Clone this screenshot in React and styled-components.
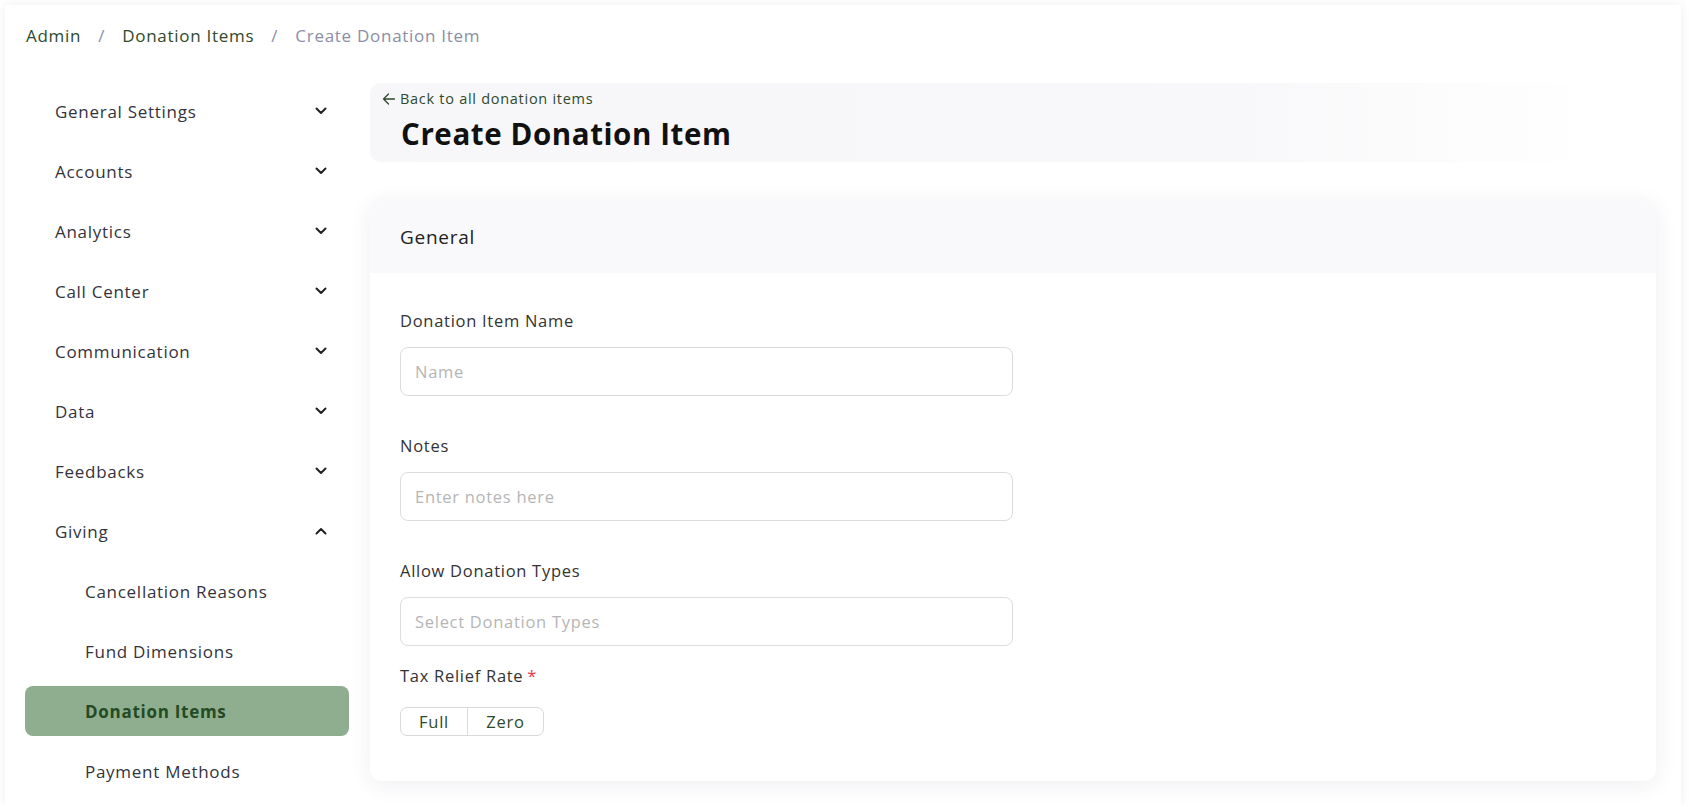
import React from "react";
import styled, { createGlobalStyle } from "styled-components";

const GlobalStyle = createGlobalStyle`
  body {
    margin: 0;
    background: #fff;
    font-family: "Open Sans", "Liberation Sans", sans-serif;
    letter-spacing: 0.045em;
    color: #33333d;
  }
  * { box-sizing: border-box; }
`;

const Frame = styled.div`
  margin: 5px 8px 0 5px;
  height: 800px;
  overflow: hidden;
  background: #fff;
  box-shadow: 0 0 10px rgba(30, 30, 60, 0.07);
  padding: 0 25px 0 20px;
  display: flex;
  flex-direction: column;
`;

const Crumbs = styled.nav`
  flex-shrink: 0;
  display: flex;
  align-items: flex-start;
  gap: 17px;
  padding: 18px 0 0 1px;
  height: 78px;
  font-size: 17px;
  line-height: 26px;
`;

const Crumb = styled.span`
  color: ${(p) => (p.$current ? "#8a8ea6" : "#2e4a2c")};
`;

const Slash = styled.span`
  color: #8a8ea6;
`;

const Body = styled.div`
  display: grid;
  grid-template-columns: 324px 1fr;
  column-gap: 21px;
  flex: 1;
`;

const Sidebar = styled.ul`
  list-style: none;
  margin: 0;
  padding: 3px 0 0;
  display: flex;
  flex-direction: column;
  gap: 10px;
`;

const NavItem = styled.li`
  flex-shrink: 0;
  height: 50px;
  display: flex;
  align-items: center;
  justify-content: space-between;
  padding: 0 22px 0 ${(p) => (p.$sub ? 60 : 30)}px;
  border-radius: 8px;
  font-size: 17px;
  color: ${(p) => (p.$active ? "#244a24" : "#33333d")};
  font-weight: ${(p) => (p.$active ? 700 : 400)};
  background: ${(p) => (p.$active ? "#8fae8f" : "transparent")};
`;

const Main = styled.main`
  display: flex;
  flex-direction: column;
  gap: 38px;
`;

const PageHead = styled.div`
  height: 79px;
  border-radius: 10px;
  padding: 6px 0 0 12px;
  background: linear-gradient(90deg, #f7f7fa 0%, #f8f8fa 70%, rgba(255, 255, 255, 0) 100%);
  margin-right: 50px;
`;

const BackLink = styled.a`
  display: flex;
  align-items: center;
  gap: 4px;
  font-size: 14.5px;
  line-height: 20px;
  color: #2e4a2c;
  text-decoration: none;
`;

const Title = styled.h1`
  margin: 3px 0 0;
  padding-left: 19px;
  font-size: 29.5px;
  line-height: 44px;
  font-weight: 700;
  letter-spacing: 0.02em;
  color: #111;
`;

const Card = styled.section`
  background: #fff;
  border-radius: 12px;
  box-shadow: 0 4px 22px rgba(40, 40, 90, 0.08);
  overflow: hidden;
`;

const CardHead = styled.div`
  height: 73px;
  background: #f9f9fb;
  display: flex;
  align-items: center;
  padding-left: 30px;
  font-size: 19px;
  color: #222;
`;

const CardBody = styled.div`
  padding: 36px 30px 45px;
  display: flex;
  flex-direction: column;
`;

const Label = styled.label`
  font-size: 16.5px;
  line-height: 24px;
  color: #333;
  margin-top: ${(p) => p.$top || 0}px;
`;

const Star = styled.span`
  color: #e53945;
  margin-left: 4px;
`;

const Input = styled.input`
  margin-top: 14px;
  width: 613px;
  height: 49px;
  border: 1px solid #dcdcdc;
  border-radius: 8px;
  padding: 0 14px;
  font-family: inherit;
  letter-spacing: inherit;
  font-size: 16.5px;
  color: #333;
  outline: none;
  &::placeholder {
    color: #b5b5b5;
  }
`;

const Segments = styled.div`
  margin-top: 19px;
  display: inline-flex;
  align-self: flex-start;
  border: 1px solid #d9d9d9;
  border-radius: 7px;
  height: 29px;
`;

const Segment = styled.button`
  width: ${(p) => p.$w}px;
  border: none;
  background: none;
  font-family: inherit;
  letter-spacing: inherit;
  font-size: 16.5px;
  color: #2e4a2c;
  padding: 0;
  & + & {
    border-left: 1px solid #d9d9d9;
  }
`;

const Chevron = ({ up }) => (
  <svg width="12" height="8" viewBox="0 0 12 8" fill="none">
    <path
      d={up ? "M1.5 6.5 6 2l4.5 4.5" : "M1.5 1.5 6 6l4.5-4.5"}
      stroke="#222"
      strokeWidth="2"
      strokeLinecap="round"
      strokeLinejoin="round"
    />
  </svg>
);

const ArrowLeft = () => (
  <svg width="14" height="14" viewBox="0 0 14 14" fill="none">
    <path d="M12.5 7H1.5M6.5 2 1.5 7l5 5" stroke="#2e4a2c" strokeWidth="1.3" strokeLinecap="round" strokeLinejoin="round" />
  </svg>
);

const groups = ["General Settings", "Accounts", "Analytics", "Call Center", "Communication", "Data", "Feedbacks"];
const giving = ["Cancellation Reasons", "Fund Dimensions", "Donation Items", "Payment Methods"];

export default function App() {
  return (
    <>
      <GlobalStyle />
      <Frame>
        <Crumbs>
          <Crumb>Admin</Crumb>
          <Slash>/</Slash>
          <Crumb>Donation Items</Crumb>
          <Slash>/</Slash>
          <Crumb $current>Create Donation Item</Crumb>
        </Crumbs>
        <Body>
          <Sidebar>
            {groups.map((g) => (
              <NavItem key={g}>
                {g}
                <Chevron />
              </NavItem>
            ))}
            <NavItem>
              Giving
              <Chevron up />
            </NavItem>
            {giving.map((g) => (
              <NavItem key={g} $sub $active={g === "Donation Items"}>
                {g}
              </NavItem>
            ))}
          </Sidebar>
          <Main>
            <PageHead>
              <BackLink href="#">
                <ArrowLeft />
                Back to all donation items
              </BackLink>
              <Title>Create Donation Item</Title>
            </PageHead>
            <Card>
              <CardHead>General</CardHead>
              <CardBody>
                <Label>Donation Item Name</Label>
                <Input placeholder="Name" />
                <Label $top={38}>Notes</Label>
                <Input placeholder="Enter notes here" />
                <Label $top={38}>Allow Donation Types</Label>
                <Input placeholder="Select Donation Types" />
                <Label $top={18}>
                  Tax Relief Rate<Star>*</Star>
                </Label>
                <Segments>
                  <Segment $w={66}>Full</Segment>
                  <Segment $w={76}>Zero</Segment>
                </Segments>
              </CardBody>
            </Card>
          </Main>
        </Body>
      </Frame>
    </>
  );
}
